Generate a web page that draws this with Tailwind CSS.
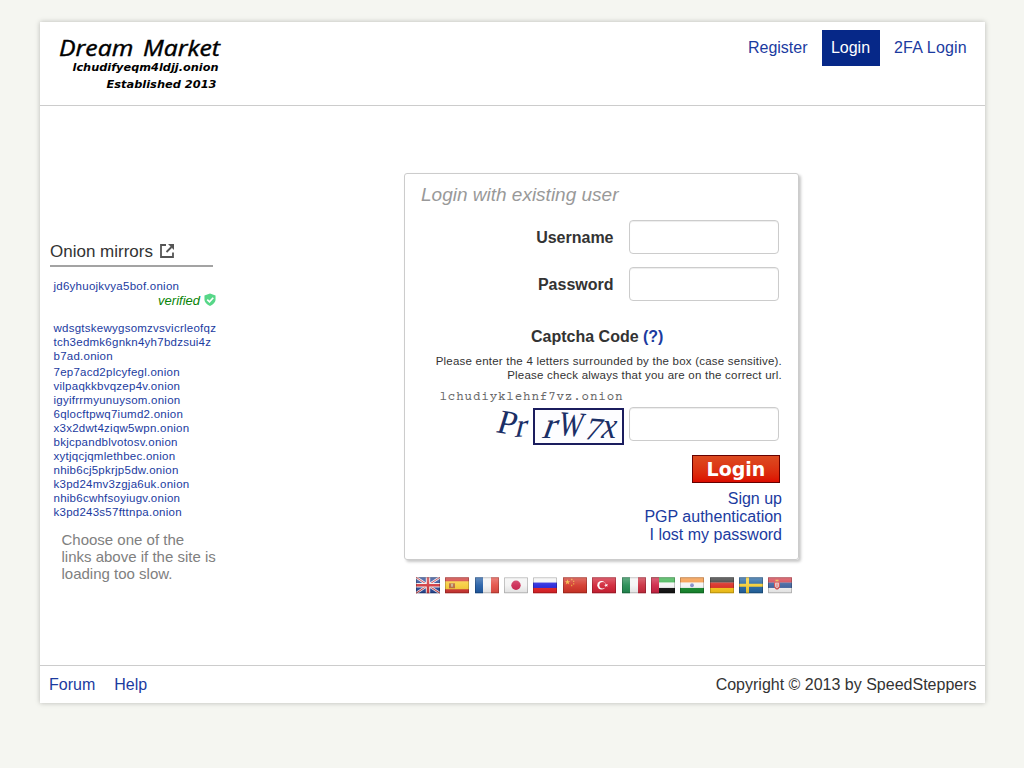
<!DOCTYPE html>
<html lang="en">
<head>
<meta charset="utf-8">
<title>Login</title>
<script src="https://cdn.jsdelivr.net/npm/@tailwindcss/browser@4"></script>
</head>
<body class="min-h-screen bg-[#f5f6f1] pt-[22px] font-['Liberation_Sans',Arial,sans-serif] text-[16px] leading-[18px] text-[#333]">
<div class="ml-[40px] flex h-[681px] w-[945px] flex-col bg-white shadow-[0_0_5px_rgba(0,0,0,0.25)]">
  <header class="flex h-[84px] justify-between border-b border-[#ccc]">
    <svg class="ml-[10px] h-[80px] w-[190px]" viewBox="50 22 190 80">
      <g fill="#000" font-style="italic">
        <text x="59" y="55.500" font-family="Open Sans, sans-serif" font-size="22.500" font-weight="500" stroke="#000" stroke-width=".45" word-spacing="3" textLength="161" lengthAdjust="spacingAndGlyphs">Dream Market</text>
        <g font-family="DejaVu Sans, sans-serif" font-size="11" font-weight="bold">
          <text x="72.500" y="71" textLength="146" lengthAdjust="spacingAndGlyphs">lchudifyeqm4ldjj.onion</text>
          <text x="106.500" y="88" textLength="110" lengthAdjust="spacingAndGlyphs">Established 2013</text>
        </g>
      </g>
    </svg>
    <nav class="mr-[9px] mt-[8px] flex h-[36px] gap-[5px] leading-[35px] text-[#1b3b9f]">
      <a class="pl-[9px] pr-[9.5px]">Register</a>
      <a class="w-[58px] bg-[#062888] pr-[1px] text-center text-white">Login</a>
      <a class="w-[91px] whitespace-nowrap pl-[9px] tracking-[0.2px]">2FA Login</a>
    </nav>
  </header>

  <main class="flex grow">
    <aside class="ml-[10px] mt-[136px] w-[170px]">
      <h2 class="flex h-[25px] w-[163px] items-start border-b-2 border-[#a3a3a3] text-[17px] leading-[20px]">Onion mirrors
        <svg class="ml-[7px] mt-[2px] h-[14px] w-[15px]" viewBox="0 0 15 14" fill="none" stroke="#555" stroke-width="1.800"><path d="M6 1H1v12h12V8.500M6.500 8L11.500 3"/><path d="M8 0H14V6Z" fill="#555" stroke="none"/></svg>
      </h2>
      <div class="ml-[3.5px] mt-[12px] w-[163px] text-[11.5px] leading-[14px] tracking-[0.25px] text-[#1b3b9f]">
        <div>jd6yhuojkvya5bof.onion</div>
        <div class="relative top-px flex justify-end pr-[0.5px] text-[13px] italic tracking-normal text-[#078407]">verified
          <svg class="ml-[4px] -mt-[1px] h-[14px] w-[12px]" viewBox="0 0 13 14"><path d="M6.500 0L12.500 2V7Q12 11 6.500 13.500Q1 11 .5 7V2Z" fill="#57d788"/><path d="M3.500 6.500L6 9L10 4.500" fill="none" stroke="#fff" stroke-width="1.800"/></svg>
        </div>
        <div class="mt-[14px] whitespace-nowrap">wdsgtskewygsomzvsvicrleofqz<br>tch3edmk6gnkn4yh7bdzsui4z<br>b7ad.onion</div>
        <div class="mt-[2px]">7ep7acd2plcyfegl.onion<br>vilpaqkkbvqzep4v.onion<br>igyifrrmyunuysom.onion<br>6qlocftpwq7iumd2.onion<br>x3x2dwt4ziqw5wpn.onion<br>bkjcpandblvotosv.onion<br>xytjqcjqmlethbec.onion<br>nhib6cj5pkrjp5dw.onion<br>k3pd24mv3zgja6uk.onion<br>nhib6cwhfsoyiugv.onion<br>k3pd243s57fttnpa.onion</div>
      </div>
      <p class="ml-[11.5px] mt-[12px] whitespace-nowrap text-[15px] leading-[17px] text-[#808080]">Choose one of the<br>links above if the site is<br>loading too slow.</p>
    </aside>

    <section class="ml-[184px] mt-[67px] w-[395px]">
      <div class="flex h-[387px] flex-col rounded-[3px] border border-[#ccc] pl-[16px] pr-[16px] shadow-[2px_2px_3px_rgba(0,0,0,0.22)]">
        <h1 class="mt-[9px] h-[37px] text-[19px] italic leading-[24px] text-[#999]">Login with existing user</h1>
        <label class="flex h-[34px] items-center justify-end gap-[15.5px] pr-[3px] font-bold"><span class="pt-[2px]">Username</span><span class="h-[34px] w-[150px] rounded-[4px] border border-[#ccc] shadow-[inset_0_1px_1px_rgba(0,0,0,0.075)]"></span></label>
        <label class="mt-[13px] flex h-[34px] items-center justify-end gap-[15.5px] pr-[3px] font-bold"><span class="pt-[2px]">Password</span><span class="h-[34px] w-[150px] rounded-[4px] border border-[#ccc] shadow-[inset_0_1px_1px_rgba(0,0,0,0.075)]"></span></label>
        <h2 class="ml-[110px] mt-[27px] font-bold">Captcha Code <a class="text-[#1b3b9f]">(?)</a></h2>
        <p class="mt-[8px] whitespace-nowrap text-right text-[11.5px] leading-[14px] tracking-[0.22px]">Please enter the 4 letters surrounded by the box (case sensitive).<br>Please check always that you are on the correct url.</p>
        <div class="mt-[5px] flex h-[61px] items-start justify-end gap-[5px] pr-[3px]">
          <svg class="h-[60px] w-[189px]" viewBox="435 387 189 60">
            <text x="439.500" y="400" font-size="12.500" fill="#666" textLength="183" class="font-['Courier_Prime','Liberation_Mono',monospace]">lchudiyklehnf7vz.onion</text>
            <rect x="534" y="409" width="89" height="35" fill="#fdfdff" stroke="#1b1d5e" stroke-width="2"/>
            <g font-family="Liberation Serif, serif" fill="#1b2f66">
              <text transform="translate(495 432) rotate(9) skewX(-8)" font-size="34">P</text>
              <text transform="translate(514 437) rotate(-4) skewX(-18)" font-size="33">r</text>
              <text transform="translate(541 438) skewX(-20)" font-size="38">r</text>
              <text transform="translate(558 435) rotate(4) scale(.84 1)" font-size="35" font-style="italic">W</text>
              <text transform="translate(583 439) rotate(4) skewX(-14)" font-size="32">7</text>
              <text transform="translate(601 438) skewX(-6) scale(.9 1)" font-size="37" font-style="italic">x</text>
            </g>
          </svg>
          <span class="mt-[20px] h-[34px] w-[150px] rounded-[4px] border border-[#ccc] shadow-[inset_0_1px_1px_rgba(0,0,0,0.075)]"></span>
        </div>
        <button class="mr-[2px] mt-[7px] h-[28px] w-[88px] shrink-0 self-end border border-[#600] bg-linear-to-b from-[#dc4a20] to-[#dc0b00] font-['DejaVu_Sans',sans-serif] text-[19px] font-bold leading-[25px] text-white">Login</button>
        <div class="mt-[7px] text-right text-[#1b3b9f]">Sign up<br>PGP authentication<br>I lost my password</div>
      </div>
      <div class="ml-[12px] mt-[17px] flex h-[16.5px] w-[376.4px] justify-between *:h-[16.5px] *:w-[24px]">
        <svg viewBox="0 0 24 16"><path fill="#274795" d="M0 0h24v16H0z"/><path d="M0 0L24 16M24 0L0 16" stroke="#e5e5ee" stroke-width="2.600"/><path d="M0 0L24 16M24 0L0 16" stroke="#d0353a" stroke-width="1"/><path d="M12 0V16M0 8H24" stroke="#f0f0f0" stroke-width="4.400"/><path d="M12 0V16M0 8H24" stroke="#d0353a" stroke-width="2.400"/><use href="#gloss"/></svg>
        <svg viewBox="0 0 24 16"><path fill="#cf3430" d="M0 0h24v16H0z"/><path fill="#f7cc37" d="M0 4h24v8H0z"/><path fill="#b9683b" d="M4 6h6v5H4z"/><path fill="#c8b08c" d="M6 6.500h2v3H6z"/><use href="#gloss"/></svg>
        <svg viewBox="0 0 24 16"><path fill="#1f5ba5" d="M0 0h8v16H0z"/><path fill="#f4f4f4" d="M8 0h8v16H8z"/><path fill="#e34c42" d="M16 0h8v16h-8z"/><use href="#gloss"/></svg>
        <svg viewBox="0 0 24 16"><path fill="#f3f3f3" d="M0 0h24v16H0z"/><circle cx="12" cy="8" r="4.700" fill="#cb2450"/><use href="#gloss"/></svg>
        <svg viewBox="0 0 24 16"><path fill="#f4f4f4" d="M0 0h24v6H0z"/><path fill="#2222dc" d="M0 5.300h24V11H0z"/><path fill="#df1f24" d="M0 10.700h24V16H0z"/><use href="#gloss"/></svg>
        <svg viewBox="0 0 24 16"><path fill="#d23325" d="M0 0h24v16H0z"/><path fill="#f5b334" d="M4.500 2l.7 2h2L5.600 5.200l.6 2-1.700-1.200-1.700 1.200.6-2L1.800 4h2z"/><path fill="#e89730" d="M8 1.500h1.500V3H8zM10 3.500h1.300v1.300H10zM10 6h1.300v1.300H10zM8 7.500h1.300V9H8z"/><use href="#gloss"/></svg>
        <svg viewBox="0 0 24 16"><path fill="#d01f32" d="M0 0h24v16H0z"/><circle cx="9.500" cy="8" r="4.200" fill="#fff"/><circle cx="10.700" cy="8" r="3.300" fill="#d01f32"/><path fill="#fff" d="M12 8l1.500-.6V6l1 1.200 1.500-.4-.9 1.200.9 1.300-1.500-.5-1 1.200V8.600z"/><use href="#gloss"/></svg>
        <svg viewBox="0 0 24 16"><path fill="#218a50" d="M0 0h8v16H0z"/><path fill="#f4f4f4" d="M8 0h8v16H8z"/><path fill="#c92a3c" d="M16 0h8v16h-8z"/><use href="#gloss"/></svg>
        <svg viewBox="0 0 24 16"><path fill="#37b04a" d="M0 0h24v5.500H0z"/><path fill="#f4f4f4" d="M0 5.300h24v5.500H0z"/><path fill="#111" d="M0 10.700h24V16H0z"/><path fill="#cd2142" d="M0 0h8v16H0z"/><use href="#gloss"/></svg>
        <svg viewBox="0 0 24 16"><path fill="#f5923a" d="M0 0h24v5.500H0z"/><path fill="#f4f4f4" d="M0 5.300h24v5.500H0z"/><path fill="#15882c" d="M0 10.700h24V16H0z"/><circle cx="12" cy="8" r="1.900" fill="#8289c9"/><use href="#gloss"/></svg>
        <svg viewBox="0 0 24 16"><path fill="#333" d="M0 0h24v5.500H0z"/><path fill="#d82a20" d="M0 5.300h24v5.500H0z"/><path fill="#f7c416" d="M0 10.700h24V16H0z"/><use href="#gloss"/></svg>
        <svg viewBox="0 0 24 16"><path fill="#22639f" d="M0 0h24v16H0z"/><path fill="#f5cd30" d="M7 0h3v16H7zM0 6.500h24v3H0z"/><use href="#gloss"/></svg>
        <svg viewBox="0 0 24 16"><path fill="#d33c48" d="M0 0h24v5.500H0z"/><path fill="#3c5f9c" d="M0 5.300h24v5.500H0z"/><path fill="#f2f2f2" d="M0 10.700h24V16H0z"/><path fill="#d34a4a" d="M6 4h6v5.500Q11 12 9 12.500Q7 12 6 9.500z"/><path fill="#eee" d="M7.300 5.500h3.400v4L9 11 7.300 9.500z"/><path fill="#d34a4a" d="M8.500 6h1v4h-1z"/><path fill="#e6b63e" d="M7.500 2.500h3V4h-3z"/><use href="#gloss"/></svg>
      </div>
    </section>
  </main>

  <footer class="flex h-[38px] items-center justify-between border-t border-[#ccc] pl-[9px] pr-[8.5px]">
    <div class="flex gap-[19px] text-[#1b3b9f]"><a>Forum</a><a>Help</a></div>
    <div>Copyright © 2013 by SpeedSteppers</div>
  </footer>
</div>
<svg class="absolute h-0 w-0"><defs><linearGradient id="shine" x2="0" y2="1"><stop stop-color="#fff" stop-opacity=".3"/><stop offset=".5" stop-color="#fff" stop-opacity=".08"/><stop offset="1" stop-color="#000" stop-opacity=".08"/></linearGradient><g id="gloss"><path fill="url(#shine)" d="M0 0h24v16H0z"/><path fill="none" stroke="#000" stroke-opacity=".2" d="M.5 .5h23v15H.5z"/></g></defs></svg>
</body>
</html>
